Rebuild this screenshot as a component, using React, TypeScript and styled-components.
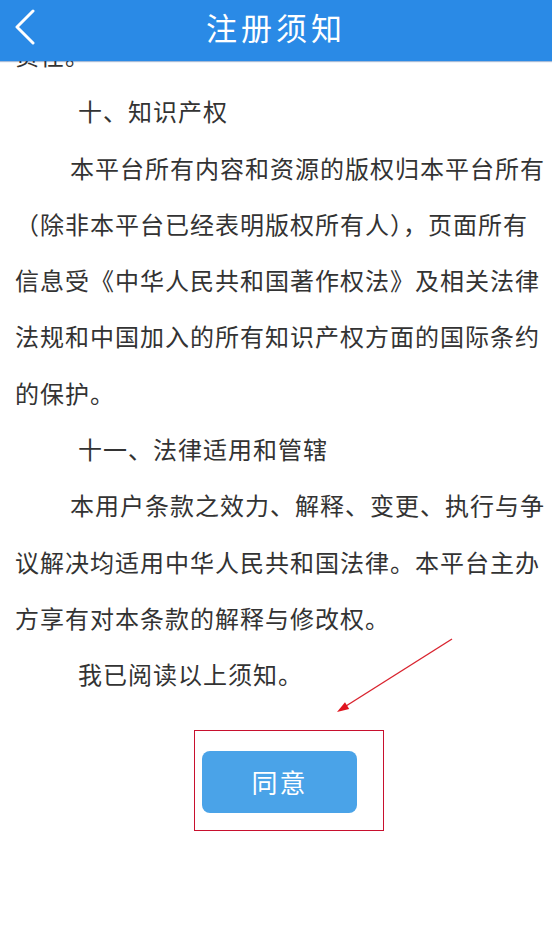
import styled, { createGlobalStyle } from "styled-components";

const GlobalStyle = createGlobalStyle`
  html, body {
    margin: 0;
    padding: 0;
    background: #ffffff;
  }
  body {
    font-family: "Noto Sans CJK SC", "Noto Sans", sans-serif;
  }
`;

type Block =
  | { kind: "heading"; text: string }
  | { kind: "para"; lines: string[] };

const blocks: Block[] = [
  { kind: "para", lines: ["责任。"] },
  { kind: "heading", text: "十、知识产权" },
  {
    kind: "para",
    lines: [
      "本平台所有内容和资源的版权归本平台所有",
      "（除非本平台已经表明版权所有人），页面所有",
      "信息受《中华人民共和国著作权法》及相关法律",
      "法规和中国加入的所有知识产权方面的国际条约",
      "的保护。",
    ],
  },
  { kind: "heading", text: "十一、法律适用和管辖" },
  {
    kind: "para",
    lines: [
      "本用户条款之效力、解释、变更、执行与争",
      "议解决均适用中华人民共和国法律。本平台主办",
      "方享有对本条款的解释与修改权。",
    ],
  },
  { kind: "heading", text: "我已阅读以上须知。" },
];

export default function App() {
  return (
    <>
      <GlobalStyle />
      <StyledPage>
        <StyledHeader>
          <StyledBack aria-label="返回">
            <svg width="24" height="36" viewBox="0 0 24 36">
              <path
                d="M19 2 L3 18 L19 34"
                fill="none"
                stroke="#ffffff"
                strokeWidth="3"
                strokeLinecap="round"
                strokeLinejoin="round"
              />
            </svg>
          </StyledBack>
          <StyledTitle>注册须知</StyledTitle>
        </StyledHeader>

        <StyledViewport>
          <StyledArticle>
            {blocks.map((block, i) =>
              block.kind === "heading" ? (
                <StyledHeading key={i}>{block.text}</StyledHeading>
              ) : (
                <StyledPara key={i} $first={i === 0}>
                  {block.lines.map((line, j) => (
                    <span key={j}>{line}</span>
                  ))}
                </StyledPara>
              )
            )}
          </StyledArticle>

          <StyledActions>
            <StyledArrow width="124" height="84" viewBox="0 0 124 84">
              <line
                x1="117"
                y1="3"
                x2="11"
                y2="70"
                stroke="#d9232e"
                strokeWidth="1.4"
              />
              <polygon points="2,76 14.2,73 10,66.2" fill="#e0141e" />
            </StyledArrow>
            <StyledFrame>
              <StyledAgree>同意</StyledAgree>
            </StyledFrame>
          </StyledActions>
        </StyledViewport>
      </StyledPage>
    </>
  );
}

const StyledPage = styled.div`
  width: 552px;
  height: 941px;
  overflow: hidden;
  background: #ffffff;
  display: flex;
  flex-direction: column;
`;

const StyledHeader = styled.header`
  position: relative;
  z-index: 2;
  flex: 0 0 61px;
  height: 61px;
  box-sizing: border-box;
  padding-bottom: 8px;
  background: #2a8ae6;
  box-shadow: 0 1px 1px rgba(0, 60, 140, 0.35);
  display: flex;
  align-items: center;
  justify-content: center;
`;

const StyledBack = styled.button`
  position: absolute;
  left: 14px;
  top: 9px;
  border: 0;
  padding: 0;
  background: transparent;
  display: flex;
`;

const StyledTitle = styled.h1`
  margin: 0 0 0 0;
  font-size: 31px;
  font-weight: 400;
  letter-spacing: 4px;
  color: #ffffff;
  line-height: 1;
`;

const StyledViewport = styled.main`
  flex: 1;
  overflow: hidden;
`;

const StyledArticle = styled.article`
  margin-top: -34px;
  padding: 0 7px 0 15px;
  color: #333333;
  font-size: 24px;
  letter-spacing: 1px;
  line-height: 56.3px;
`;

const StyledHeading = styled.h2`
  margin: 0;
  padding-left: 63px;
  font-size: inherit;
  font-weight: 400;
  white-space: nowrap;
`;

const StyledPara = styled.p<{ $first?: boolean }>`
  margin: 0;
  white-space: nowrap;

  span {
    display: block;
  }
  span:first-child {
    padding-left: ${(p) => (p.$first ? "0" : "55px")};
  }
`;

const StyledActions = styled.div`
  position: relative;
  padding: 27px 0 0 194px;
`;

const StyledArrow = styled.svg`
  position: absolute;
  left: 335px;
  top: -67px;
`;

const StyledFrame = styled.div`
  width: 188px;
  height: 99px;
  border: 1px solid #c8102e;
  box-sizing: content-box;
  padding: 0;
  display: flex;
  align-items: flex-start;
`;

const StyledAgree = styled.button`
  margin: 20px 0 0 7px;
  width: 155px;
  height: 62px;
  border: 0;
  border-radius: 8px;
  background: #4aa3e8;
  color: #ffffff;
  font-family: "Noto Sans CJK SC", "Noto Sans", sans-serif;
  font-size: 26px;
  letter-spacing: 2px;
  display: flex;
  align-items: center;
  justify-content: center;
`;
